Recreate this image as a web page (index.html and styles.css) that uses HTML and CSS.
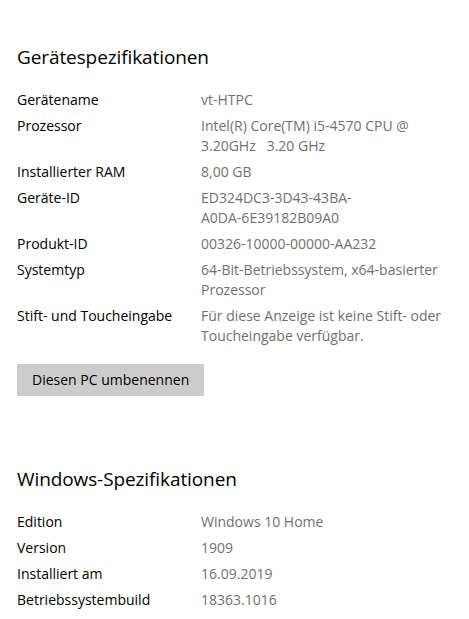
FILE: index.html
```html
<!DOCTYPE html>
<html lang="de">
<head>
<meta charset="utf-8">
<title>Info</title>
<link rel="stylesheet" href="styles.css">
</head>
<body>
<main class="page">
  <section class="section">
    <h2 class="title">Gerätespezifikationen</h2>
    <dl class="specs">
      <div class="row"><dt>Gerätename</dt><dd>vt-HTPC</dd></div>
      <div class="row"><dt>Prozessor</dt><dd>Intel(R) Core(TM) i5-4570 CPU @ 3.20GHz&nbsp;&nbsp;&nbsp;3.20 GHz</dd></div>
      <div class="row"><dt>Installierter RAM</dt><dd>8,00 GB</dd></div>
      <div class="row"><dt>Geräte-ID</dt><dd>ED324DC3-3D43-43BA-<br>A0DA-6E39182B09A0</dd></div>
      <div class="row"><dt>Produkt-ID</dt><dd>00326-10000-00000-AA232</dd></div>
      <div class="row"><dt>Systemtyp</dt><dd>64-Bit-Betriebssystem, x64-basierter Prozessor</dd></div>
      <div class="row"><dt>Stift- und Toucheingabe</dt><dd>Für diese Anzeige ist keine Stift- oder Toucheingabe verfügbar.</dd></div>
    </dl>
    <button class="btn" type="button">Diesen PC umbenennen</button>
  </section>
  <section class="section section-win">
    <h2 class="title">Windows-Spezifikationen</h2>
    <dl class="specs">
      <div class="row"><dt>Edition</dt><dd>Windows 10 Home</dd></div>
      <div class="row"><dt>Version</dt><dd>1909</dd></div>
      <div class="row"><dt>Installiert am</dt><dd>16.09.2019</dd></div>
      <div class="row"><dt>Betriebssystembuild</dt><dd>18363.1016</dd></div>
    </dl>
  </section>
</main>
</body>
</html>
```
FILE: styles.css
```css
html, body {
  margin: 0;
  padding: 0;
  background: #ffffff;
}
body {
  font-family: "Open Sans", "Noto Sans", "Liberation Sans", sans-serif;
  color: #000000;
}
.page {
  padding: 42px 0 0 17px;
  width: 434px;
}
.section {
  display: flex;
  flex-direction: column;
  align-items: flex-start;
}
.section-win {
  margin-top: 68px;
}
.title {
  margin: 0 0 18px 0;
  font-size: 19px;
  font-weight: 400;
  line-height: 30px;
  letter-spacing: -0.1px;
}
.specs {
  margin: 0;
  display: flex;
  flex-direction: column;
  gap: 6px;
}
.row {
  display: grid;
  grid-template-columns: 184px 250px;
  font-size: 14px;
  line-height: 20px;
}
.row dt {
  margin: 0;
  color: #000000;
}
.row dd {
  margin: 0;
  color: #707070;
}
.btn {
  margin-top: 18px;
  box-sizing: border-box;
  height: 32px;
  width: 187px;
  padding: 0 0 0 15px;
  border: none;
  background: #cccccc;
  color: #000000;
  font-family: inherit;
  font-size: 14px;
  line-height: 20px;
  white-space: nowrap;
  text-align: left;
}
```
